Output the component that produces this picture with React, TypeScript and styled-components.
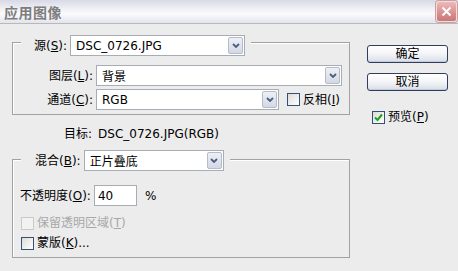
import React from "react";
import styled, {createGlobalStyle} from "styled-components";

const GlobalStyle = createGlobalStyle`
  html, body {
    margin: 0;
    padding: 0;
    background: #ececec;
  }
  body {
    font-family: "DejaVu Sans", "Noto Sans CJK SC", sans-serif;
    font-size: 12px;
    color: #000;
  }
`;

const Window = styled.div`
  width: 458px;
  height: 271px;
  background: #ececec;
  display: flex;
  flex-direction: column;
  overflow: hidden;
`;

const TitleBar = styled.div`
  height: 24px;
  box-sizing: border-box;
  display: flex;
  align-items: center;
  justify-content: space-between;
  padding: 0 1px 0 4px;
  background: linear-gradient(#d7d9e5 0%, #f4f4f8 45%, #fbfbfd 60%, #e3e4ec 100%);
  border-bottom: 1px solid #b9b9bd;
`;

const Title = styled.span`
  font-family: "Noto Sans CJK SC", sans-serif;
  font-weight: bold;
  font-size: 14px;
  color: #7d7d7d;
  letter-spacing: 0.5px;
`;

const CloseButton = styled.div`
  width: 21px;
  height: 21px;
  box-sizing: border-box;
  border: 1px solid #f3dcdc;
  border-radius: 3px;
  background: linear-gradient(#eeb9b9, #d88e8e 60%, #c97878);
  display: flex;
  align-items: center;
  justify-content: center;
  box-shadow: 0 0 0 1px #c9a0a0;
`;

const Body = styled.div`
  flex: 1;
  display: flex;
`;

const Main = styled.div`
  width: 338px;
  margin-left: 12px;
  padding-top: 18px;
  display: flex;
  flex-direction: column;
`;

const Side = styled.div`
  margin-left: 17px;
  padding-top: 21px;
  display: flex;
  flex-direction: column;
  align-items: flex-start;
`;

const Group = styled.div<{$top?: number}>`
  margin-top: ${(p) => p.$top ?? 0}px;
  border: 1px solid #a2a2a2;
  box-shadow: inset 1px 1px 0 #fff;
  display: flex;
  flex-direction: column;
`;

const Legend = styled.div<{$lift: number; $pad: number}>`
  align-self: flex-start;
  display: flex;
  align-items: center;
  gap: 3px;
  margin: -${(p) => p.$lift}px 0 0 8px;
  padding: 0 6px 0 ${(p) => p.$pad}px;
  background: #ececec;
`;

const Label = styled.span<{$muted?: boolean}>`
  white-space: nowrap;
  line-height: 16px;
  color: ${(p) => (p.$muted ? "#a8a8a8" : "#000")};
`;

const FieldGrid = styled.div`
  display: grid;
  grid-template-columns: 80px auto;
  column-gap: 3px;
  row-gap: 3px;
  margin-top: 9px;
  padding-bottom: 4px;
  align-items: center;
`;

const RightLabel = styled(Label)`
  text-align: right;
`;

const Inline = styled.div`
  display: flex;
  align-items: center;
  gap: 8px;
`;

const ComboBox = styled.div<{$w: number}>`
  width: ${(p) => p.$w}px;
  height: 21px;
  box-sizing: border-box;
  border: 1px solid #a7adb4;
  background: #fff;
  display: flex;
  align-items: stretch;
  padding: 1px;
`;

const ComboText = styled.span`
  flex: 1;
  padding-left: 4px;
  display: flex;
  align-items: center;
  white-space: nowrap;
  overflow: hidden;
`;

const DropButton = styled.span`
  width: 15px;
  box-sizing: border-box;
  border: 1px solid #b4bccb;
  border-radius: 2px;
  background: linear-gradient(#eef0f5, #d3d8e3);
  display: flex;
  align-items: center;
  justify-content: center;
`;

const TextBox = styled.div`
  width: 43px;
  height: 21px;
  box-sizing: border-box;
  border: 1px solid #a7adb4;
  background: #fff;
  padding-left: 3px;
  display: flex;
  align-items: center;
  margin-left: 3px;
`;

const Target = styled.div`
  margin-top: 11px;
  height: 16px;
  padding-left: 52px;
  display: flex;
  align-items: center;
  gap: 6px;
`;

const OpacityRow = styled.div`
  display: flex;
  align-items: center;
  margin-top: 14px;
  padding-left: 7px;
`;

const Percent = styled.span`
  margin-left: 8px;
`;

const CheckRow = styled.label<{$indent?: number; $top?: number; $bottom?: number}>`
  display: flex;
  align-items: center;
  gap: 2px;
  height: 20px;
  padding-left: ${(p) => p.$indent ?? 0}px;
  margin-top: ${(p) => p.$top ?? 0}px;
  margin-bottom: ${(p) => p.$bottom ?? 0}px;
`;

const Box = styled.span<{$disabled?: boolean}>`
  width: 13px;
  height: 13px;
  box-sizing: border-box;
  border: 1px solid ${(p) => (p.$disabled ? "#c9cbc8" : "#33507a")};
  background: ${(p) =>
    p.$disabled ? "#f2f2f0" : "linear-gradient(135deg, #dcdcd6, #ffffff)"};
  display: flex;
  align-items: center;
  justify-content: center;
  margin-right: 1px;
`;

const Button = styled.div`
  width: 81px;
  height: 18px;
  box-sizing: border-box;
  border: 1px solid #2f3e5e;
  border-radius: 3px;
  background: linear-gradient(#ffffff 0%, #f3f4f7 50%, #d9dde7 100%);
  box-shadow: inset 0 -1px 0 #c3cadb;
  display: flex;
  align-items: center;
  justify-content: center;
  line-height: 1;
  margin-bottom: 10px;
`;

const Chevron = () => (
  <svg width="8" height="5" viewBox="0 0 8 5">
    <path d="M1 1 L4 4 L7 1" fill="none" stroke="#4b5d80" strokeWidth="1.8" />
  </svg>
);

const CloseX = () => (
  <svg width="11" height="11" viewBox="0 0 11 11">
    <path d="M1.5 1.5 L9.5 9.5 M9.5 1.5 L1.5 9.5" stroke="#fff" strokeWidth="2" />
  </svg>
);

const Tick = () => (
  <svg width="9" height="9" viewBox="0 0 9 9">
    <path d="M1 4.5 L3.5 7 L8 1.5" fill="none" stroke="#21a121" strokeWidth="2" />
  </svg>
);

const Combo: React.FC<{w: number; value: string}> = ({w, value}) => (
  <ComboBox $w={w}>
    <ComboText>{value}</ComboText>
    <DropButton>
      <Chevron />
    </DropButton>
  </ComboBox>
);

const Check: React.FC<{
  text: React.ReactNode;
  checked?: boolean;
  disabled?: boolean;
}> = ({text, checked, disabled}) => (
  <>
    <Box $disabled={disabled}>{checked && <Tick />}</Box>
    <Label $muted={disabled}>{text}</Label>
  </>
);

export default function App() {
  return (
    <Window>
      <GlobalStyle />
      <TitleBar>
        <Title>应用图像</Title>
        <CloseButton>
          <CloseX />
        </CloseButton>
      </TitleBar>
      <Body>
        <Main>
          <Group>
            <Legend $lift={8} $pad={13}>
              <Label>
                源(<u>S</u>):
              </Label>
              <Combo w={175} value="DSC_0726.JPG" />
            </Legend>
            <FieldGrid>
              <RightLabel>
                图层(<u>L</u>):
              </RightLabel>
              <Combo w={246} value="背景" />
              <RightLabel>
                通道(<u>C</u>):
              </RightLabel>
              <Inline>
                <Combo w={183} value="RGB" />
                <CheckRow>
                  <Check text={<>反相(<u>I</u>)</>} />
                </CheckRow>
              </Inline>
            </FieldGrid>
          </Group>

          <Target>
            <Label>目标:</Label>
            <Label>DSC_0726.JPG(RGB)</Label>
          </Target>

          <Group $top={17}>
            <Legend $lift={10} $pad={14}>
              <Label>
                混合(<u>B</u>):
              </Label>
              <Combo w={140} value="正片叠底" />
            </Legend>
            <OpacityRow>
              <Label>
                不透明度(<u>O</u>):
              </Label>
              <TextBox>40</TextBox>
              <Percent>%</Percent>
            </OpacityRow>
            <CheckRow $indent={8} $top={7}>
              <Check disabled text={<>保留透明区域(<u>T</u>)</>} />
            </CheckRow>
            <CheckRow $indent={8} $bottom={4}>
              <Check text={<>蒙版(<u>K</u>)...</>} />
            </CheckRow>
          </Group>
        </Main>
        <Side>
          <Button>确定</Button>
          <Button>取消</Button>
          <CheckRow $indent={5} $top={6}>
            <Check checked text={<>预览(<u>P</u>)</>} />
          </CheckRow>
        </Side>
      </Body>
    </Window>
  );
}
